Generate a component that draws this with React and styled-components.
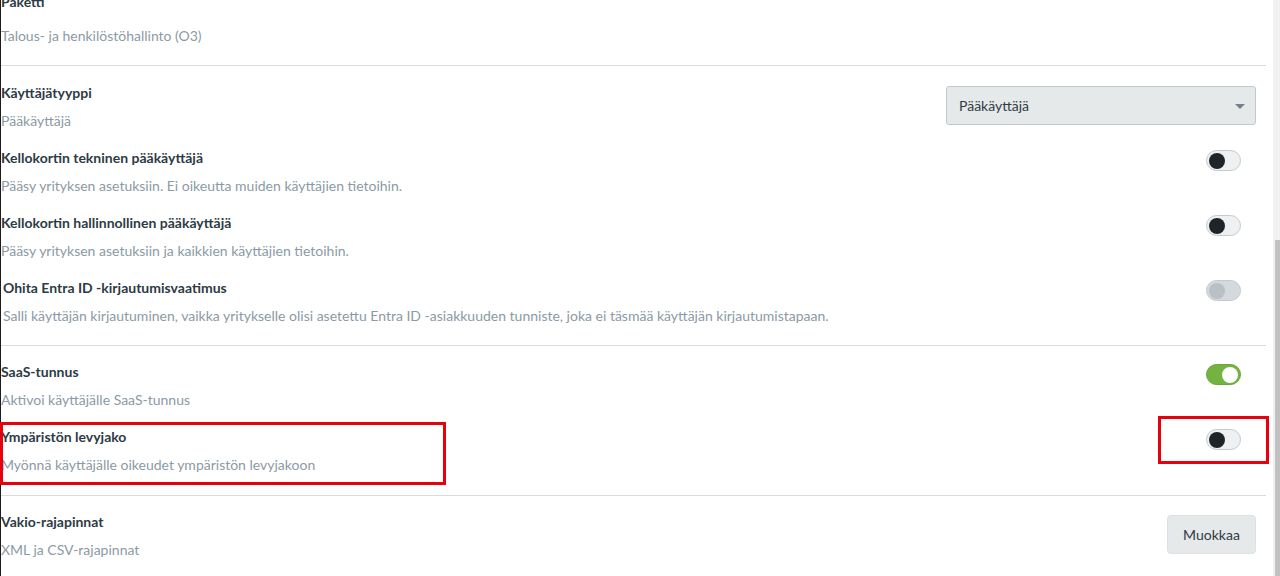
import React from 'react';
import styled, { createGlobalStyle } from 'styled-components';

const GlobalStyle = createGlobalStyle`
  html, body {
    margin: 0;
    padding: 0;
    background: #ffffff;
  }
  body {
    font-family: Lato, "Open Sans", Arial, sans-serif;
    color: #2d3b45;
  }
`;

const Page = styled.div`
  display: flex;
  height: 576px;
  overflow: hidden;
  background: #fff;
`;

const Main = styled.div`
  width: 1265px;
  border-left: 1px solid #1c1c1c;
`;

const Content = styled.div`
  margin-top: -19px;
`;

const Group = styled.section`
  padding: 9px 0 10px;
  border-top: ${p => (p.first ? 'none' : '1px solid #d7dcdf')};
`;

const Row = styled.div`
  position: relative;
  display: flex;
  justify-content: space-between;
  align-items: flex-start;
  height: 65px;
  box-sizing: border-box;
  padding: ${p => p.top ?? 8}px 10px 0 ${p => p.indent || 0}px;
`;

const Texts = styled.div`
  display: flex;
  flex-direction: column;
  gap: ${p => p.gap || 8}px;
`;

const Title = styled.div`
  font-size: 14px;
  line-height: 20px;
  font-weight: 700;
  color: #2d3b45;
`;

const Desc = styled.div`
  font-size: 14px;
  line-height: 20px;
  color: #8b9aa5;
`;

const Select = styled.div`
  position: relative;
  margin-top: 3px;
  width: 310px;
  height: 39px;
  box-sizing: border-box;
  display: flex;
  align-items: center;
  padding: 0 12px;
  background: #e6e9ea;
  border: 1px solid #c2c9cd;
  border-radius: 3px;
  font-size: 14px;
  color: #2d3b45;

  &::after {
    content: '';
    position: absolute;
    right: 10px;
    top: 17px;
    border-left: 5px solid transparent;
    border-right: 5px solid transparent;
    border-top: 5px solid #73818c;
  }
`;

const Toggle = styled.div`
  margin-top: 2px;
  margin-right: 15px;
  width: 35px;
  height: 21px;
  box-sizing: border-box;
  border-radius: 11px;
  border: 1px solid ${p => (p.on ? '#6aa43a' : '#c3cacf')};
  background: ${p => (p.on ? '#74b241' : p.disabled ? '#d3d9dc' : '#eef0f1')};
  display: flex;
  align-items: center;
  justify-content: ${p => (p.on ? 'flex-end' : 'flex-start')};
  padding: 0 2px;
`;

const Knob = styled.div`
  width: 16px;
  height: 16px;
  border-radius: 50%;
  background: ${p => (p.on ? '#ffffff' : p.disabled ? '#b9c1c6' : '#1f2429')};
`;

const Button = styled.div`
  margin-top: 3px;
  width: 89px;
  height: 39px;
  box-sizing: border-box;
  display: flex;
  align-items: center;
  justify-content: center;
  background: #e6e9ea;
  border: 1px solid #dde1e3;
  border-radius: 4px;
  font-size: 14px;
  color: #2d3b45;
`;

const Highlight = styled.div`
  position: absolute;
  border: 3px solid #e8000b;
  box-sizing: border-box;
  pointer-events: none;
`;

const ScrollTrack = styled.div`
  margin-left: 7px;
  width: 7px;
  height: 576px;
  background: #f1f1f1;
  display: flex;
  flex-direction: column;
  justify-content: flex-end;
  align-items: flex-end;
`;

const ScrollThumb = styled.div`
  width: 5px;
  height: 336px;
  background: #c1c1c1;
`;

const Switch = ({ on, disabled }) => (
  <Toggle on={on} disabled={disabled}>
    <Knob on={on} disabled={disabled} />
  </Toggle>
);

const App = () => {
  return (
    <Page>
      <GlobalStyle />
      <Main>
        <Content>
          <Group first>
            <Row top={2}>
              <Texts gap={14}>
                <Title>Paketti</Title>
                <Desc>Talous- ja henkilöstöhallinto (O3)</Desc>
              </Texts>
            </Row>
          </Group>

          <Group>
            <Row>
              <Texts>
                <Title>Käyttäjätyyppi</Title>
                <Desc>Pääkäyttäjä</Desc>
              </Texts>
              <Select>Pääkäyttäjä</Select>
            </Row>
            <Row>
              <Texts>
                <Title>Kellokortin tekninen pääkäyttäjä</Title>
                <Desc>Pääsy yrityksen asetuksiin. Ei oikeutta muiden käyttäjien tietoihin.</Desc>
              </Texts>
              <Switch />
            </Row>
            <Row>
              <Texts>
                <Title>Kellokortin hallinnollinen pääkäyttäjä</Title>
                <Desc>Pääsy yrityksen asetuksiin ja kaikkien käyttäjien tietoihin.</Desc>
              </Texts>
              <Switch />
            </Row>
            <Row indent={2}>
              <Texts>
                <Title>Ohita Entra ID -kirjautumisvaatimus</Title>
                <Desc>Salli käyttäjän kirjautuminen, vaikka yritykselle olisi asetettu Entra ID -asiakkuuden tunniste, joka ei täsmää käyttäjän kirjautumistapaan.</Desc>
              </Texts>
              <Switch disabled />
            </Row>
          </Group>

          <Group>
            <Row top={7}>
              <Texts>
                <Title>SaaS-tunnus</Title>
                <Desc>Aktivoi käyttäjälle SaaS-tunnus</Desc>
              </Texts>
              <Switch on />
            </Row>
            <Row top={7}>
              <Texts>
                <Title>Ympäristön levyjako</Title>
                <Desc>Myönnä käyttäjälle oikeudet ympäristön levyjakoon</Desc>
              </Texts>
              <Switch />
              <Highlight style={{ left: -1, top: 2, width: 446, height: 63 }} />
              <Highlight style={{ left: 1157, top: -4, width: 111, height: 48 }} />
            </Row>
          </Group>

          <Group>
            <Row top={7}>
              <Texts>
                <Title>Vakio-rajapinnat</Title>
                <Desc>XML ja CSV-rajapinnat</Desc>
              </Texts>
              <Button>Muokkaa</Button>
            </Row>
          </Group>
        </Content>
      </Main>
      <ScrollTrack>
        <ScrollThumb />
      </ScrollTrack>
    </Page>
  );
};

export default App;
